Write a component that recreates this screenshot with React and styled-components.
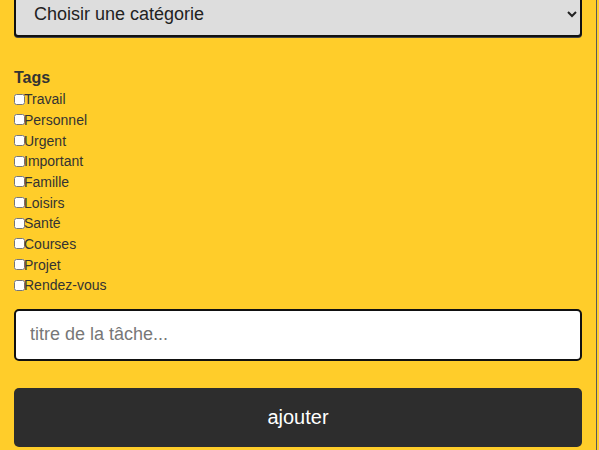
import React from 'react';
import styled, { createGlobalStyle } from 'styled-components';

const GlobalStyle = createGlobalStyle`
  html, body {
    margin: 0;
    padding: 0;
    background: #ffcd2a;
    font-family: "Liberation Sans", Arial, sans-serif;
    overflow: hidden;
  }
`;

const Page = styled.div`
  width: 596px;
  height: 450px;
  border-right: 1px solid #5a5a5a;
  background: #ffcd2a;
  overflow: hidden;
`;

const Form = styled.form`
  display: flex;
  flex-direction: column;
  padding: 0 14px 0 14px;
  margin-top: -9px;
  width: 568px;
`;

const Select = styled.select`
  height: 46px;
  width: 100%;
  padding: 0 14px;
  font-family: "Liberation Sans", Arial, sans-serif;
  font-size: 18px;
  color: #222;
  background: #dddddd;
  border: 2px solid #111;
  border-radius: 4px;
  box-shadow: 0 1px 0 #444;
`;

const TagsTitle = styled.div`
  margin-top: 32px;
  font-size: 16px;
  font-weight: bold;
  color: #333;
  line-height: 18px;
`;

const TagList = styled.div`
  display: flex;
  flex-direction: column;
  margin-top: 2px;
`;

const TagRow = styled.label`
  display: flex;
  align-items: center;
  height: 20.67px;
  font-size: 14px;
  color: #333;
`;

const Check = styled.input`
  margin: 0 -1px 0 0;
  width: 11px;
  height: 11px;
`;

const TitleInput = styled.input`
  margin-top: 13px;
  height: 52px;
  box-sizing: border-box;
  width: 100%;
  padding: 0 14px;
  font-family: "Liberation Sans", Arial, sans-serif;
  font-size: 18px;
  background: #fff;
  border: 2px solid #111;
  border-radius: 5px;
  outline: none;
  &::placeholder {
    color: #777;
  }
`;

const AddButton = styled.button`
  margin-top: 27px;
  height: 59px;
  width: 100%;
  background: #2d2d2d;
  color: #fff;
  border: none;
  border-radius: 5px;
  font-family: "Liberation Sans", Arial, sans-serif;
  font-size: 20px;
`;

const tags = ['Travail', 'Personnel', 'Urgent', 'Important', 'Famille', 'Loisirs', 'Santé', 'Courses', 'Projet', 'Rendez-vous'];

export default function App() {
  return (
    <>
      <GlobalStyle />
      <Page>
        <Form onSubmit={e => e.preventDefault()}>
          <Select defaultValue="">
            <option value="">Choisir une catégorie</option>
          </Select>
          <TagsTitle>Tags</TagsTitle>
          <TagList>
            {tags.map(t => (
              <TagRow key={t}>
                <Check type="checkbox" />
                {t}
              </TagRow>
            ))}
          </TagList>
          <TitleInput placeholder="titre de la tâche..." />
          <AddButton type="submit">ajouter</AddButton>
        </Form>
      </Page>
    </>
  );
}
